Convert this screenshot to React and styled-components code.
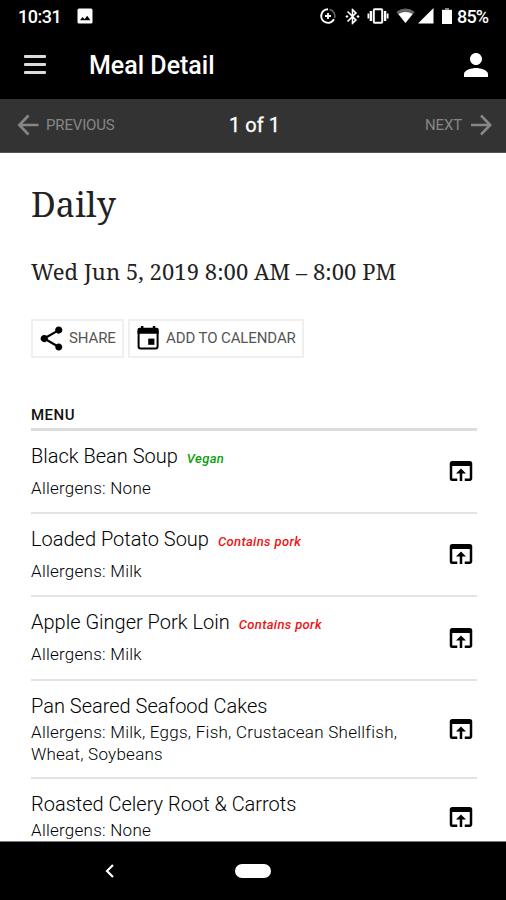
import styled, { createGlobalStyle } from "styled-components"
import { MdBluetoothConnected, MdOpenInBrowser, MdPerson, MdShare } from "react-icons/md"

const GlobalStyle = createGlobalStyle`
    * {
        box-sizing: border-box;
    }
    body {
        margin: 0;
        background-color: white;
        font-family: Roboto, "Liberation Sans", sans-serif;
    }
`;

const Screen = styled.div`
    width: 506px;
    height: 900px;
    display: flex;
    flex-direction: column;
    overflow: hidden;
    background-color: white;
`;

const StatusBar = styled.div`
    height: 32px;
    display: flex;
    align-items: center;
    justify-content: space-between;
    padding: 0 16px 0 18px;
    background-color: black;
    color: white;
    font-size: 18px;
    font-weight: 500;
`;
const StatusGroup = styled.div`
    display: flex;
    align-items: center;
`;
const StatusIcon = styled.span`
    display: flex;
    margin-left: ${(props) => props.$gap}px;
`;
const Clock = styled.span`
    letter-spacing: -0.5px;
`;
const Battery = styled.span`
    width: 33px;
    margin-left: 5px;
    letter-spacing: -0.8px;
`;

const AppBar = styled.header`
    height: 67px;
    display: flex;
    align-items: center;
    padding: 0 12px 2px 24px;
    background-color: black;
    color: white;
`;
const MenuButton = styled.button`
    width: 22px;
    height: 19px;
    display: flex;
    flex-direction: column;
    justify-content: space-between;
    padding: 0;
    border: none;
    background: none;
`;
const MenuLine = styled.span`
    width: 22px;
    height: 3px;
    border-radius: 1px;
    background-color: #dcdcdc;
`;
const Title = styled.h1`
    flex: 1;
    margin: 1px 0 0 43px;
    font-size: 25px;
    font-weight: 500;
`;

const Pager = styled.nav`
    height: 54px;
    display: grid;
    grid-template-columns: 1fr auto 1fr;
    align-items: center;
    padding: 0 14px 1px 17px;
    background-color: #333;
    color: #868686;
    border-bottom: 1px solid #555;
`;
const PagerLink = styled.a`
    display: flex;
    align-items: center;
    justify-self: ${(props) => (props.$end ? "end" : "start")};
    gap: ${(props) => (props.$end ? 8 : 7)}px;
    font-size: 15px;
    letter-spacing: -0.15px;
`;
const PagerCount = styled.span`
    color: white;
    font-size: 20px;
    -webkit-text-stroke: 0.3px white;
`;

const Content = styled.main`
    flex: 1;
    min-height: 0;
    overflow: hidden;
    padding: 30px 29px 0 31px;
`;
const MealName = styled.h2`
    margin: 0;
    font-family: "Noto Serif", "Droid Serif", "DejaVu Serif Condensed", serif;
    font-size: 34px;
    font-weight: 400;
    line-height: 42px;
    letter-spacing: 0.1px;
    color: #222;
`;
const MealTime = styled.p`
    margin: 30px 0 0;
    font-family: "Noto Serif", "Droid Serif", "DejaVu Serif Condensed", serif;
    font-size: 22px;
    line-height: 32px;
    letter-spacing: 0.06px;
    white-space: nowrap;
    color: #222;
`;
const Actions = styled.div`
    display: flex;
    gap: 4px;
    margin-top: 32px;
`;
const ActionButton = styled.button`
    width: ${(props) => props.$width}px;
    height: 39px;
    display: flex;
    align-items: center;
    gap: 4px;
    padding: 0 0 1px 5px;
    border: 2px solid #efefef;
    background-color: white;
    color: #555;
    font-family: inherit;
    font-size: 15px;
    letter-spacing: -0.1px;
    white-space: nowrap;

    svg {
        flex: none;
        margin: 0 -1px;
        color: black;
    }
`;

const SectionTitle = styled.h3`
    height: 42px;
    margin: 31px 0 0;
    padding-top: 17px;
    border-bottom: 3px solid #dcdcdc;
    font-size: 15px;
    font-weight: 500;
    line-height: 18px;
    letter-spacing: 0.5px;
    color: #111;
`;
const Dish = styled.div`
    height: ${(props) => props.$height}px;
    display: flex;
    align-items: center;
    justify-content: space-between;
    padding: 0 1px 1px 0;
    border-bottom: 2px solid #e3e3e3;
`;
const DishInfo = styled.div`
    align-self: flex-start;
    width: 390px;
    padding-top: 12px;
`;
const DishName = styled.div`
    font-size: 20px;
    font-weight: 300;
    line-height: 26px;
    white-space: nowrap;
    color: #000;
`;
const Tag = styled.em`
    margin-left: 9px;
    font-size: 13px;
    font-weight: 500;
    letter-spacing: 0.35px;
    color: ${(props) => props.$color};
`;
const Allergens = styled.div`
    margin-top: ${(props) => (props.$tagged ? 5 : 2)}px;
    font-size: 17px;
    font-weight: 300;
    line-height: 22px;
    letter-spacing: 0.25px;
    color: #000;
`;

const SystemNav = styled.footer`
    height: 59px;
    display: grid;
    grid-template-columns: 1fr auto 1fr;
    align-items: center;
    border-top: 1px solid #777;
    background-color: black;
`;
const BackButton = styled.button`
    justify-self: start;
    margin-left: 105px;
    padding: 0;
    border: none;
    background: none;
    line-height: 0;
`;
const HomePill = styled.span`
    width: 36px;
    height: 14px;
    border-radius: 7px;
    background-color: white;
`;

const green = "#0a9f0a";
const red = "#ee1414";

const dishes = [
  { name: "Black Bean Soup", tag: "Vegan", color: green, allergens: "None", height: 83 },
  { name: "Loaded Potato Soup", tag: "Contains pork", color: red, allergens: "Milk", height: 83 },
  { name: "Apple Ginger Pork Loin", tag: "Contains pork", color: red, allergens: "Milk", height: 84 },
  { name: "Pan Seared Seafood Cakes", allergens: "Milk, Eggs, Fish, Crustacean Shellfish, Wheat, Soybeans", height: 98 },
  { name: "Roasted Celery Root & Carrots", allergens: "None", height: 78 },
];

const Arrow = ({ flip }) => (
  <svg width="22" height="22" viewBox="0 0 22 22" fill="none" stroke="currentColor" strokeWidth="2.6">
    <path d={flip ? "M1 11h19M11 1.5l9.2 9.5-9.2 9.5" : "M21.5 11H2M11.5 1.5L2.3 11l9.2 9.5"} />
  </svg>
)

const Picture = () => (
  <svg width="16" height="16" viewBox="0 0 16 16">
    <rect x="0.5" y="0.5" width="15" height="15" rx="1.5" fill="white" />
    <path d="M3 12.3l2.6-3.3 2 2.2 2.6-3.4 3.2 4.5z" fill="black" />
  </svg>
)

const DataSaver = () => (
  <svg width="16" height="16" viewBox="0 0 16 16" fill="none" stroke="white">
    <path d="M8 1.2A6.8 6.8 0 1 0 14 11.3" strokeWidth="2" />
    <path d="M9.5 1.4A6.8 6.8 0 0 1 14.5 10" strokeWidth="1.6" stroke="#666" />
    <path d="M8 5v6M5 8h6" strokeWidth="1.8" />
  </svg>
)

const Vibrate = () => (
  <svg width="22" height="16" viewBox="0 0 22 16" fill="none" stroke="white">
    <rect x="6.8" y="1.2" width="8.4" height="13.6" rx="0.8" strokeWidth="2" />
    <path d="M3.9 3v10M18.1 3v10" strokeWidth="2.4" />
    <path d="M1.4 5.5v5M20.6 5.5v5" strokeWidth="1.8" />
  </svg>
)

const Wifi = () => (
  <svg width="19" height="16" viewBox="0 0 19 16">
    <path d="M0.3 4Q9.5-2.8 18.7 4L9.5 15z" fill="#666" />
    <path d="M2.4 6Q9.5 2 16.6 6L9.5 15z" fill="white" />
  </svg>
)

const Signal = () => (
  <svg width="16" height="16" viewBox="0 0 16 16">
    <path d="M15.5 0v15.5H0z" fill="white" />
  </svg>
)

const BatteryLevel = () => (
  <svg width="10" height="16" viewBox="0 0 10 16">
    <path d="M3 0h4v1.8H3z" fill="#888" />
    <path d="M0 1.8h10V16H0z" fill="white" />
  </svg>
)

const Calendar = () => (
  <svg width="29" height="29" viewBox="0 0 29 29">
    <rect x="4.6" y="5" width="19" height="19.4" rx="2" fill="none" stroke="currentColor" strokeWidth="2" />
    <path d="M3.6 5.5q0-1.8 1.8-1.8H7V2h2.4v1.7h9.4V2h2.4v1.7h1.6q1.8 0 1.8 1.8v4.2h-21z" fill="currentColor" />
    <path d="M14.2 14.6h6.2v6.2h-6.2z" fill="currentColor" />
  </svg>
)

const App = () => {
  return (
    <>
      <GlobalStyle />
      <Screen>
        <StatusBar>
          <StatusGroup>
            <Clock>10:31</Clock>
            <StatusIcon $gap={16}><Picture /></StatusIcon>
          </StatusGroup>
          <StatusGroup>
            <StatusIcon $gap={0}><DataSaver /></StatusIcon>
            <StatusIcon $gap={7}><MdBluetoothConnected size={19} /></StatusIcon>
            <StatusIcon $gap={5}><Vibrate /></StatusIcon>
            <StatusIcon $gap={7}><Wifi /></StatusIcon>
            <StatusIcon $gap={3}><Signal /></StatusIcon>
            <StatusIcon $gap={8}><BatteryLevel /></StatusIcon>
            <Battery>85%</Battery>
          </StatusGroup>
        </StatusBar>

        <AppBar>
          <MenuButton>
            <MenuLine />
            <MenuLine />
            <MenuLine />
          </MenuButton>
          <Title>Meal Detail</Title>
          <MdPerson size={36} />
        </AppBar>

        <Pager>
          <PagerLink><Arrow />PREVIOUS</PagerLink>
          <PagerCount>1 of 1</PagerCount>
          <PagerLink $end>NEXT<Arrow flip /></PagerLink>
        </Pager>

        <Content>
          <MealName>Daily</MealName>
          <MealTime>Wed Jun 5, 2019 8:00 AM – 8:00 PM</MealTime>
          <Actions>
            <ActionButton $width={93}><MdShare size={29} />SHARE</ActionButton>
            <ActionButton $width={176}><Calendar />ADD TO CALENDAR</ActionButton>
          </Actions>

          <SectionTitle>MENU</SectionTitle>
          {dishes.map((dish) => (
            <Dish key={dish.name} $height={dish.height}>
              <DishInfo>
                <DishName>
                  {dish.name}
                  {dish.tag && <Tag $color={dish.color}>{dish.tag}</Tag>}
                </DishName>
                <Allergens $tagged={!!dish.tag}>{`Allergens: ${dish.allergens}`}</Allergens>
              </DishInfo>
              <MdOpenInBrowser size={30} />
            </Dish>
          ))}
        </Content>

        <SystemNav>
          <BackButton>
            <svg width="9" height="14" viewBox="0 0 9 14" fill="none" stroke="white" strokeWidth="2.2">
              <path d="M8 1L2 7l6 6" />
            </svg>
          </BackButton>
          <HomePill />
        </SystemNav>
      </Screen>
    </>
  )
}

export default App
